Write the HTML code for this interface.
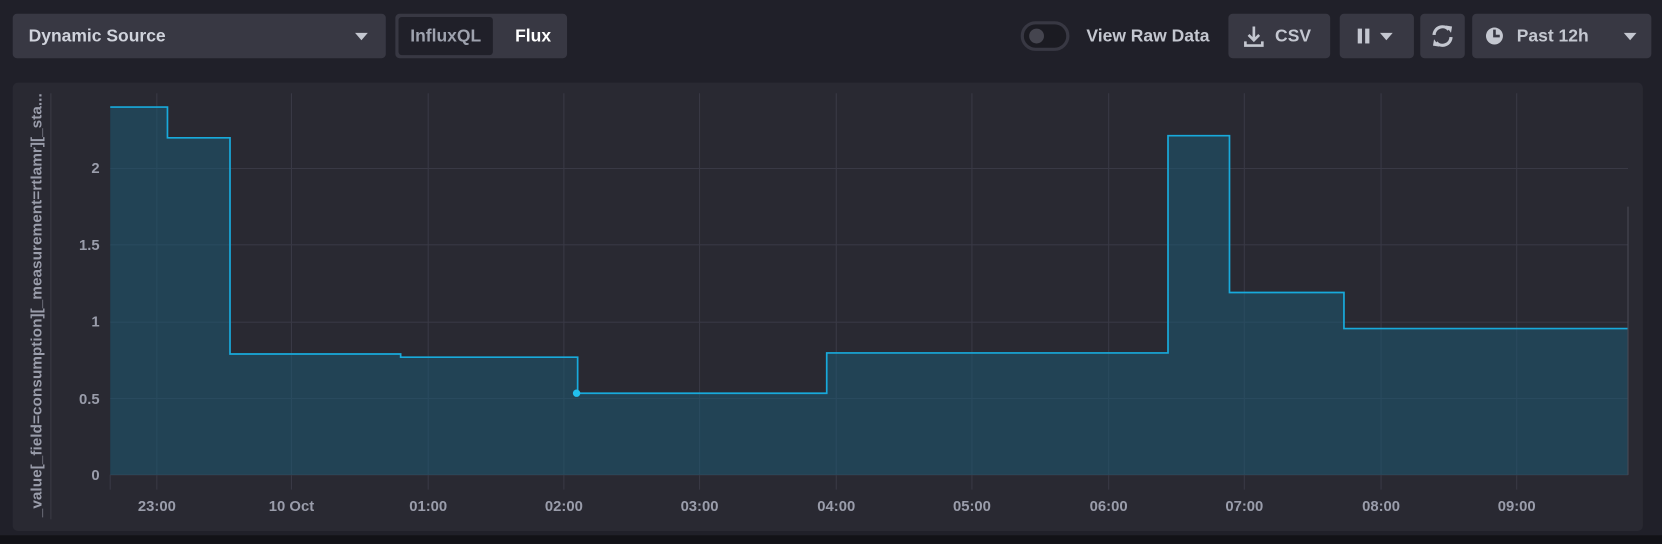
<!DOCTYPE html>
<html><head><meta charset="utf-8"><style>
html,body{margin:0;padding:0;width:1662px;height:544px;overflow:hidden;background:#16161c;}
#w{position:absolute;left:0;top:0;width:1568px;height:513px;transform:scale(1.0599);transform-origin:0 0;background:#202029;font-family:"Liberation Sans",sans-serif;font-weight:bold;color:#c4c7d0;}
.b{position:absolute;background:#383843;border-radius:4px;height:42px;top:13px;font-size:16.5px;line-height:42px;}
.tri{display:inline-block;width:0;height:0;border-left:6px solid transparent;border-right:6px solid transparent;border-top:7px solid #c4c7d0;}
</style></head><body><div id="w">
<div style="position:absolute;left:0;top:505px;width:1568px;height:8px;background:#121217"></div>
<div class="b" style="left:12px;width:352px;"><span style="position:absolute;left:15px;color:#d0d3dc">Dynamic Source</span><span class="tri" style="position:absolute;left:323px;top:18px"></span></div>
<div class="b" style="left:373px;width:162px;background:#383843"><div style="position:absolute;left:3px;top:3px;width:89px;height:36px;background:#202029;border-radius:3px;line-height:36px;text-align:center;color:#9ea2ae">InfluxQL</div><span style="position:absolute;left:113px;color:#fff">Flux</span></div>
<div style="position:absolute;left:963px;top:20px;width:46px;height:28px;border:3px solid #383843;box-sizing:border-box;border-radius:14px;background:#1b1b22"><div style="position:absolute;left:5px;top:4px;width:14px;height:14px;border-radius:7px;background:#45454f"></div></div>
<div style="position:absolute;left:1025px;top:13px;line-height:42px;font-size:16.5px;color:#c4c7d0">View Raw Data</div>
<div class="b" style="left:1159px;width:96px"><svg style="position:absolute;left:13px;top:10px" width="22" height="22" viewBox="0 0 22 22"><path d="M11 2v13M6 10l5 5 5-5M3 16v4h16v-4" stroke="#c4c7d0" stroke-width="2.5" fill="none"/></svg><span style="position:absolute;left:44px">CSV</span></div>
<div class="b" style="left:1264px;width:70px"><span style="position:absolute;left:17px;top:14px;width:4px;height:14px;background:#c4c7d0"></span><span style="position:absolute;left:24px;top:14px;width:4px;height:14px;background:#c4c7d0"></span><span class="tri" style="position:absolute;left:38px;top:18px"></span></div>
<div class="b" style="left:1340px;width:42px"><svg style="position:absolute;left:8px;top:9px" width="26" height="24" viewBox="0 0 26 24"><path d="M5 11a8 8 0 0 1 14-5M21 13a8 8 0 0 1-14 5" stroke="#c4c7d0" stroke-width="3" fill="none"/><path d="M16 2l6 1-1 6z M10 22l-6-1 1-6z" fill="#c4c7d0"/></svg></div>
<div class="b" style="left:1389px;width:169px"><svg style="position:absolute;left:12px;top:12px" width="18" height="18" viewBox="0 0 18 18"><circle cx="9" cy="9" r="8" fill="#c4c7d0"/><path d="M9 3v6h5" stroke="#383843" stroke-width="2.5" fill="none"/></svg><span style="position:absolute;left:42px">Past 12h</span><span class="tri" style="position:absolute;left:143px;top:18px"></span></div>
<div style="position:absolute;left:12px;top:78px;width:1538px;height:423px;background:#292932;border-radius:5px"></div>
<svg style="position:absolute;left:0;top:0" width="1568" height="513">
<g stroke="#393945" stroke-width="1">
<line x1="48" y1="88" x2="48" y2="490"/>
<line x1="104" y1="448" x2="104" y2="462"/>
<g>
<line x1="148" y1="88" x2="148" y2="462"/><line x1="275" y1="88" x2="275" y2="462"/><line x1="404" y1="88" x2="404" y2="462"/><line x1="532" y1="88" x2="532" y2="462"/><line x1="660" y1="88" x2="660" y2="462"/><line x1="789" y1="88" x2="789" y2="462"/><line x1="917" y1="88" x2="917" y2="462"/><line x1="1046" y1="88" x2="1046" y2="462"/><line x1="1174" y1="88" x2="1174" y2="462"/><line x1="1303" y1="88" x2="1303" y2="462"/><line x1="1431" y1="88" x2="1431" y2="462"/>
</g>
<line x1="104" y1="159" x2="1536" y2="159"/><line x1="104" y1="231" x2="1536" y2="231"/><line x1="104" y1="304" x2="1536" y2="304"/><line x1="104" y1="376" x2="1536" y2="376"/><line x1="104" y1="448" x2="1536" y2="448"/>
</g>
<path d="M104 101H158V130H217V334H378V337H545V371H780V333H1102V128H1160V276H1268V310H1536V448H104Z" fill="#1e5a72" fill-opacity="0.55"/>
<path d="M104 101H158V130H217V334H378V337H545V371H780V333H1102V128H1160V276H1268V310H1536" fill="none" stroke="#18aadc" stroke-width="1.6"/>
<line x1="1536" y1="195" x2="1536" y2="448" stroke="#4a4a55"/>
<circle cx="544" cy="371" r="3.5" fill="#22c0ef"/>
<g font-family="Liberation Sans,sans-serif" font-weight="bold" font-size="14" fill="#9a9dab">
<text x="94" y="163" text-anchor="end">2</text><text x="94" y="236" text-anchor="end">1.5</text><text x="94" y="308" text-anchor="end">1</text><text x="94" y="381" text-anchor="end">0.5</text><text x="94" y="453" text-anchor="end">0</text>
<g text-anchor="middle"><text x="148" y="482">23:00</text><text x="275" y="482">10 Oct</text><text x="404" y="482">01:00</text><text x="532" y="482">02:00</text><text x="660" y="482">03:00</text><text x="789" y="482">04:00</text><text x="917" y="482">05:00</text><text x="1046" y="482">06:00</text><text x="1174" y="482">07:00</text><text x="1303" y="482">08:00</text><text x="1431" y="482">09:00</text></g>
<text transform="translate(39,488) rotate(-90)" font-size="14" textLength="400" lengthAdjust="spacingAndGlyphs">_value[_field=consumption][_measurement=rtlamr][_sta...</text>
</g>
</svg>
</div></body></html>
